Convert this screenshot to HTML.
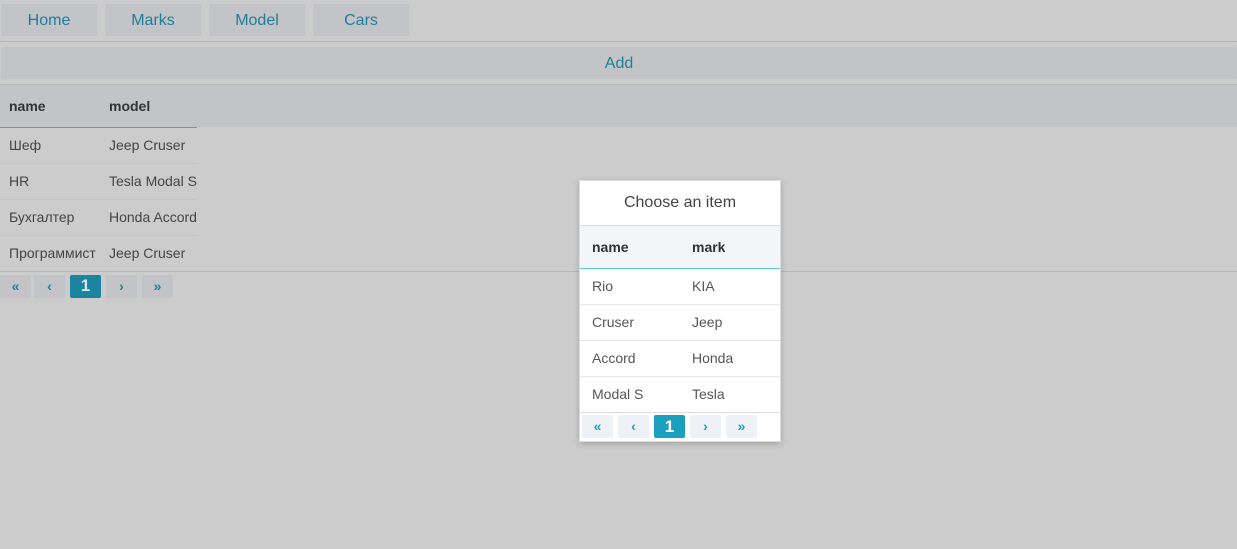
<!DOCTYPE html>
<html><head><meta charset="utf-8"><style>
*{box-sizing:border-box;margin:0;padding:0}
body{width:1237px;height:549px;background:#cccccc;font-family:"Liberation Sans",Roboto,sans-serif;position:relative;overflow:hidden;color:#444}
.a{position:absolute}
.nb{background:#c3c4c8;border-radius:2px;color:#1f7f98;font-size:16px;text-align:center;line-height:34px;top:4px;width:96px;height:32px;font-weight:500}
.hl{height:1px;background:#b5b5b5;left:0;width:1237px}
.cell{font-size:14px;line-height:36px;white-space:nowrap;overflow:hidden}
.pb{background:#c3c4c8;border-radius:2px;color:#1f7f98;text-align:center;font-size:14px;font-weight:bold;height:23px;line-height:22px;width:31px;top:275px}
.mp{background:#eef1f5;border-radius:2px;color:#1ba0c0;text-align:center;font-size:14px;font-weight:bold;height:23px;line-height:23px;width:31px;top:415px}
.rl{height:1px;background:#c2c2c2}
.ml{height:1px;background:#e8e8e8}
.hd{color:#333;font-weight:600}
</style></head><body>
<div class="a nb" style="left:1px">Home</div>
<div class="a nb" style="left:105px">Marks</div>
<div class="a nb" style="left:209px">Model</div>
<div class="a nb" style="left:313px">Cars</div>
<div class="a hl" style="top:41px"></div>
<div class="a" style="left:1px;top:47px;width:1236px;height:32px;background:#c3c4c8;border-radius:2px;color:#1f7f98;font-size:16px;font-weight:500;text-align:center;line-height:34px">Add</div>
<div class="a hl" style="top:84px"></div>
<div class="a" style="left:0;top:85px;width:1237px;height:42px;background:#c3c4c8"></div>
<div class="a" style="left:0;top:127px;width:197px;height:1px;background:#5a9fb2"></div>
<div class="a cell hd" style="left:9px;top:88px">name</div>
<div class="a cell hd" style="left:109px;top:88px">model</div>
<div class="a cell" style="left:9px;top:127px;width:88px">Шеф</div><div class="a cell" style="left:109px;top:127px;width:88px">Jeep Cruser</div>
<div class="a rl" style="left:0;top:163px;width:197px"></div>
<div class="a cell" style="left:9px;top:163px;width:88px">HR</div><div class="a cell" style="left:109px;top:163px;width:88px">Tesla Modal S</div>
<div class="a rl" style="left:0;top:199px;width:197px"></div>
<div class="a cell" style="left:9px;top:199px;width:88px">Бухгалтер</div><div class="a cell" style="left:109px;top:199px;width:88px">Honda Accord</div>
<div class="a rl" style="left:0;top:235px;width:197px"></div>
<div class="a cell" style="left:9px;top:235px;width:88px">Программист</div><div class="a cell" style="left:109px;top:235px;width:88px">Jeep Cruser</div>
<div class="a hl" style="top:271px"></div>
<div class="a pb" style="left:0">«</div>
<div class="a pb" style="left:34px">‹</div>
<div class="a pb" style="left:70px;background:#1b84a0;color:#d8e8ee;font-size:17px">1</div>
<div class="a pb" style="left:106px">›</div>
<div class="a pb" style="left:142px">»</div>

<div class="a" style="left:579px;top:180px;width:202px;height:262px;background:#fff;border:1px solid #ddd;box-shadow:0 2px 6px rgba(0,0,0,.2)"></div>
<div class="a" style="left:580px;top:181px;width:200px;height:44px;text-align:center;line-height:44px;font-size:16px;color:#444">Choose an item</div>
<div class="a" style="left:580px;top:225px;width:200px;height:1px;background:#ddd"></div>
<div class="a" style="left:580px;top:226px;width:200px;height:42px;background:#f3f5f8"></div>
<div class="a" style="left:580px;top:268px;width:200px;height:1px;background:#5bc4dd"></div>
<div class="a cell hd" style="left:592px;top:229px">name</div>
<div class="a cell hd" style="left:692px;top:229px">mark</div>
<div class="a cell" style="left:592px;top:268px;color:#555">Rio</div><div class="a cell" style="left:692px;top:268px;color:#555">KIA</div>
<div class="a ml" style="left:580px;top:304px;width:200px"></div>
<div class="a cell" style="left:592px;top:304px;color:#555">Cruser</div><div class="a cell" style="left:692px;top:304px;color:#555">Jeep</div>
<div class="a ml" style="left:580px;top:340px;width:200px"></div>
<div class="a cell" style="left:592px;top:340px;color:#555">Accord</div><div class="a cell" style="left:692px;top:340px;color:#555">Honda</div>
<div class="a ml" style="left:580px;top:376px;width:200px"></div>
<div class="a cell" style="left:592px;top:376px;color:#555">Modal S</div><div class="a cell" style="left:692px;top:376px;color:#555">Tesla</div>
<div class="a" style="left:580px;top:412px;width:200px;height:1px;background:#ddd"></div>
<div class="a mp" style="left:582px">«</div>
<div class="a mp" style="left:618px">‹</div>
<div class="a mp" style="left:654px;background:#1ba0c0;color:#fff;font-size:17px">1</div>
<div class="a mp" style="left:690px">›</div>
<div class="a mp" style="left:726px">»</div>
</body></html>
